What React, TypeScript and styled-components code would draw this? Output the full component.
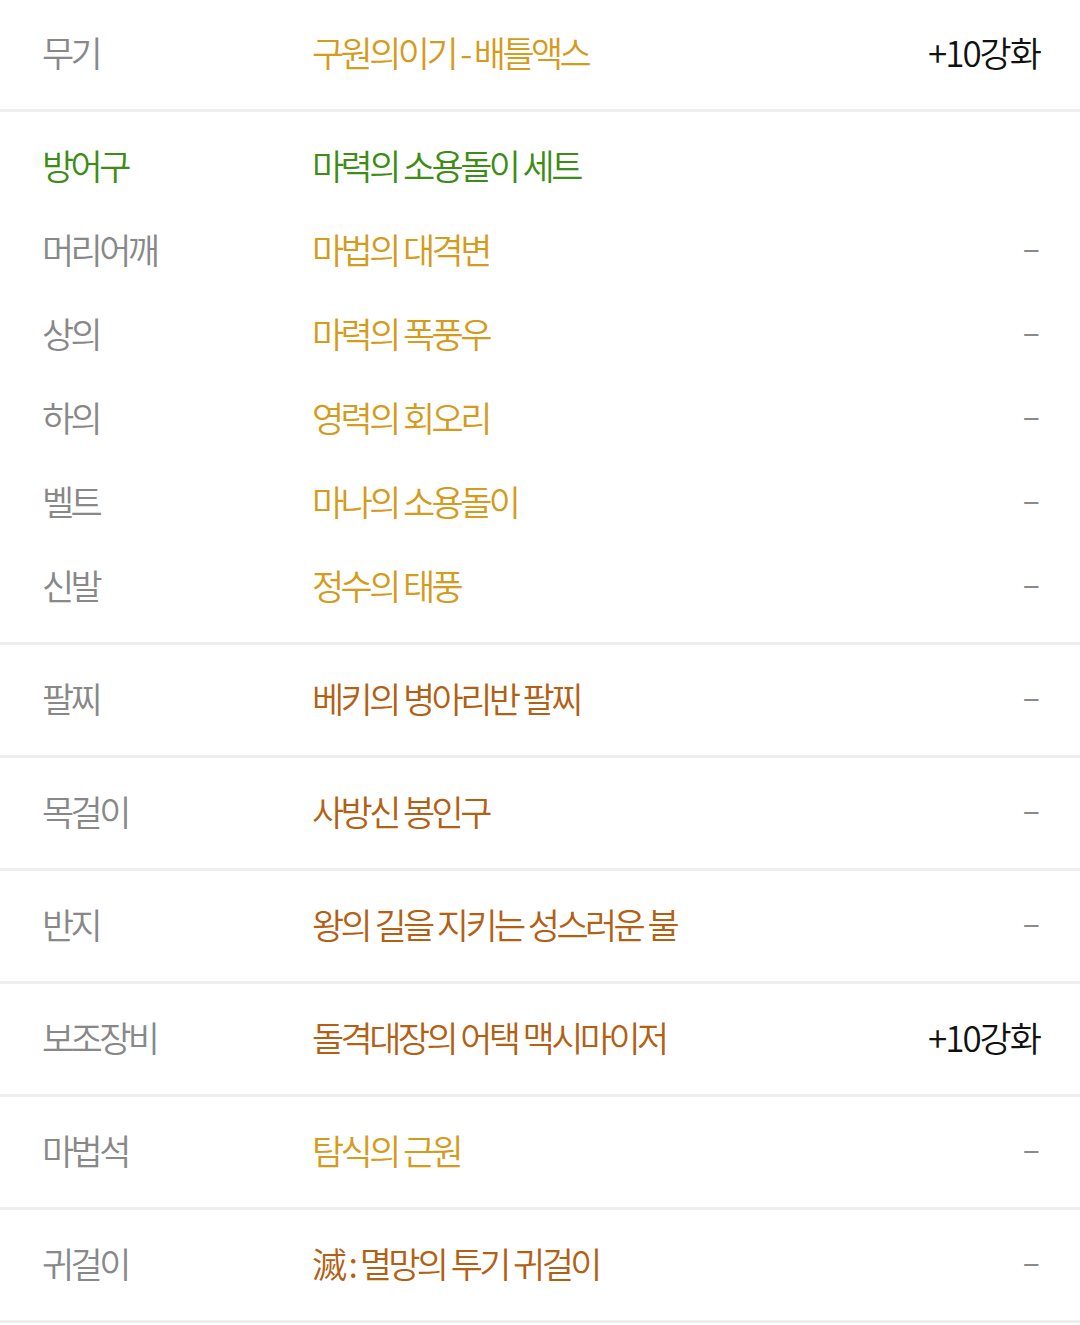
import styled, { createGlobalStyle } from 'styled-components'

type Grade = 'gold' | 'green' | 'brown'

interface Item {
  slot: string
  name: string
  grade: Grade
  enhance?: string
}

const gradeColor: Record<Grade, string> = {
  gold: '#d49b1c',
  green: '#3d8c15',
  brown: '#b35f14'
}

const sections: Item[][] = [
  [{ slot: '무기', name: '구원의이기 - 배틀액스', grade: 'gold', enhance: '+10강화' }],
  [
    { slot: '방어구', name: '마력의 소용돌이 세트', grade: 'green' },
    { slot: '머리어깨', name: '마법의 대격변', grade: 'gold', enhance: '–' },
    { slot: '상의', name: '마력의 폭풍우', grade: 'gold', enhance: '–' },
    { slot: '하의', name: '영력의 회오리', grade: 'gold', enhance: '–' },
    { slot: '벨트', name: '마나의 소용돌이', grade: 'gold', enhance: '–' },
    { slot: '신발', name: '정수의 태풍', grade: 'gold', enhance: '–' }
  ],
  [{ slot: '팔찌', name: '베키의 병아리반 팔찌', grade: 'brown', enhance: '–' }],
  [{ slot: '목걸이', name: '사방신 봉인구', grade: 'brown', enhance: '–' }],
  [{ slot: '반지', name: '왕의 길을 지키는 성스러운 불', grade: 'brown', enhance: '–' }],
  [{ slot: '보조장비', name: '돌격대장의 어택 맥시마이저', grade: 'brown', enhance: '+10강화' }],
  [{ slot: '마법석', name: '탐식의 근원', grade: 'gold', enhance: '–' }],
  [{ slot: '귀걸이', name: '滅 : 멸망의 투기 귀걸이', grade: 'brown', enhance: '–' }]
]

const GlobalStyle = createGlobalStyle`
  body {
    margin: 0;
    background: #ffffff;
    font-family: 'Noto Sans CJK KR', 'Noto Sans', sans-serif;
  }
`

const List = styled.div`
  width: 1080px;
  display: flex;
  flex-direction: column;
`

const Section = styled.div`
  padding: 13px 0;
  border-bottom: 3px solid #eeeeee;
  &:first-child {
    padding-top: 12px;
  }
`

const Row = styled.div`
  box-sizing: border-box;
  height: 84px;
  display: flex;
  align-items: center;
  padding: 0 40px 6px 42px;
  font-size: 35px;
  font-weight: 350;
  letter-spacing: -3.6px;
  word-spacing: 1px;
`

const Slot = styled.div<{ $grade?: Grade }>`
  width: 270px;
  color: ${(p) => (p.$grade ? gradeColor[p.$grade] : '#888888')};
`

const Name = styled.div<{ $grade: Grade }>`
  flex: 1;
  color: ${(p) => gradeColor[p.$grade]};
`

const Enhance = styled.div`
  color: #111111;
  letter-spacing: -2px;
`

const Dash = styled.div`
  color: #8a8a8a;
  font-size: 32px;
  font-weight: 400;
  letter-spacing: 0;
  margin-top: -4px;
`

const App = () => {
  return (
    <List>
      <GlobalStyle />
      {sections.map((items, i) => (
        <Section key={i}>
          {items.map((item) => (
            <Row key={item.slot}>
              <Slot $grade={item.slot === '방어구' ? 'green' : undefined}>{item.slot}</Slot>
              <Name $grade={item.grade}>{item.name}</Name>
              {item.enhance === '–' && <Dash>–</Dash>}
              {item.enhance && item.enhance !== '–' && <Enhance>{item.enhance}</Enhance>}
            </Row>
          ))}
        </Section>
      ))}
    </List>
  )
}

export default App
